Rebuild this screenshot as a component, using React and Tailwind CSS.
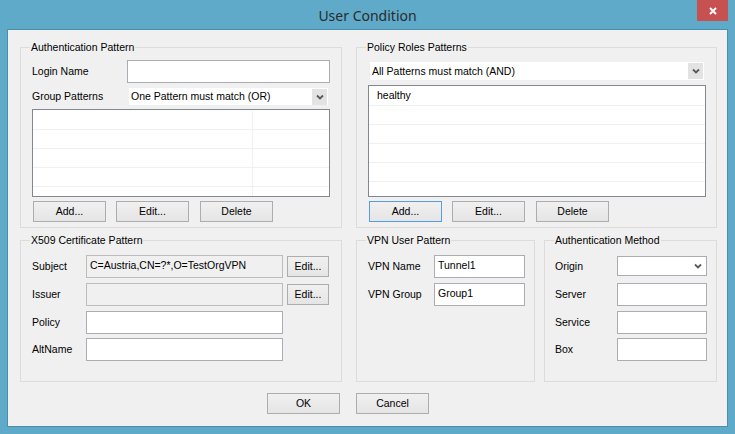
import React from 'react'

function Chevron({ className = '' }) {
  return (
    <svg width="8" height="6" viewBox="0 0 8 6" className={className}>
      <path d="M1 1.5 L4 4.5 L7 1.5" fill="none" stroke="#5a5a5a" strokeWidth="1.8" />
    </svg>
  )
}

function Btn({ w = 'w-[73px]', className = '', focused = false, children }) {
  return (
    <button
      className={`h-[21px] ${w} ${className} border ${
        focused ? 'border-[#569de5]' : 'border-[#adadad]'
      } bg-linear-to-b from-[#f0f0f0] to-[#e5e5e5] flex items-center justify-center leading-none shrink-0`}
    >
      {children}
    </button>
  )
}

function Group({ title, className = '', children }) {
  return (
    <div className={`relative border border-[#dcdcdc] shrink-0 ${className}`}>
      <span className="absolute left-[9px] -top-[7px] bg-[#f0f0f0] px-[1px] leading-[13px] whitespace-nowrap">
        {title}
      </span>
      {children}
    </div>
  )
}

function TextBox({ w, value = '', disabled = false, className = '' }) {
  return (
    <div
      className={`h-[23px] ${w} ${className} border shrink-0 ${
        disabled ? 'border-[#bcbcbc] bg-[#f0f0f0]' : 'border-[#abadb3] bg-white'
      } px-[3px] pt-[3px] leading-[13px] whitespace-nowrap overflow-hidden`}
    >
      {value}
    </div>
  )
}

function FlatSelect({ w, h, value }) {
  return (
    <div className={`${w} ${h} bg-white flex items-center justify-between shrink-0`}>
      <span className="pl-[2px] leading-[13px] whitespace-nowrap">{value}</span>
      <span className="w-[15px] h-[16px] bg-[#e3e3e3] flex items-center justify-center mr-[1px]">
        <Chevron />
      </span>
    </div>
  )
}

function ListBox({ w, h, cols = false, items = [] }) {
  return (
    <div className={`${w} ${h} border border-[#828790] bg-white overflow-hidden pt-[1px]`}>
      {[0, 1, 2, 3, 4, 5].map(i => (
        <div key={i} className="h-[19px] border-b border-[#f0f0f0] flex">
          {cols ? (
            <div className="w-[220px] border-r border-[#f0f0f0]" />
          ) : (
            <div className="pl-[8px] leading-[16px]">{items[i] || ''}</div>
          )}
        </div>
      ))}
    </div>
  )
}

export default function App() {
  return (
    <div className="w-[735px] h-[434px] bg-[#5fa9c9] flex flex-col font-['Liberation_Sans',Arial,sans-serif] text-[10.5px] text-black overflow-hidden">
      {/* title bar */}
      <div className="h-[29px] grid grid-cols-[1fr_auto_1fr] shrink-0">
        <div />
        <div className="font-['Noto_Sans',sans-serif] text-[14px] text-[#2b2b2b] leading-[29px] pt-[1px]">
          User Condition
        </div>
        <div className="flex justify-end pr-[7px]">
          <button className="w-[31px] h-[21px] bg-[#c75050] flex items-center justify-center">
            <svg width="8" height="8" viewBox="0 0 8 8">
              <path d="M1 1 L7 7 M7 1 L1 7" stroke="#fff" strokeWidth="1.9" />
            </svg>
          </button>
        </div>
      </div>

      {/* client area */}
      <div className="mx-[7px] h-[398px] border border-[#4b8fae] bg-[#f0f0f0] pt-[17px] pl-[12px] flex flex-col">
        {/* row 1 */}
        <div className="flex">
          <Group title="Authentication Pattern" className="w-[322px] h-[181px]">
            <div className="mt-[12px] pl-[11px] flex items-center h-[23px]">
              <span className="w-[95px]">Login Name</span>
              <TextBox w="w-[203px]" />
            </div>
            <div className="mt-[5px] pl-[11px] flex items-center h-[17px]">
              <span className="w-[97px]">Group Patterns</span>
              <FlatSelect w="w-[199px]" h="h-[17px]" value="One Pattern must match (OR)" />
            </div>
            <div className="mt-[4px] ml-[11px]">
              <ListBox w="w-[298px]" h="h-[88px]" cols />
            </div>
            <div className="mt-[4px] ml-[12px] flex">
              <Btn>Add...</Btn>
              <Btn className="ml-[10px]">Edit...</Btn>
              <Btn className="ml-[11px]">Delete</Btn>
            </div>
          </Group>

          <Group title="Policy Roles Patterns" className="ml-[14px] w-[361px] h-[181px]">
            <div className="mt-[14px] ml-[13px]">
              <FlatSelect w="w-[334px]" h="h-[18px]" value="All Patterns must match (AND)" />
            </div>
            <div className="mt-[5px] ml-[11px]">
              <ListBox w="w-[338px]" h="h-[112px]" items={['healthy']} />
            </div>
            <div className="mt-[4px] ml-[12px] flex">
              <Btn focused>Add...</Btn>
              <Btn className="ml-[10px]">Edit...</Btn>
              <Btn className="ml-[11px]">Delete</Btn>
            </div>
          </Group>
        </div>

        {/* row 2 */}
        <div className="flex mt-[12px]">
          <Group title="X509 Certificate Pattern" className="w-[322px] h-[142px]">
            <div className="mt-[14px] pl-[11px] flex items-center h-[23px]">
              <span className="w-[54px]">Subject</span>
              <TextBox w="w-[197px]" disabled value="C=Austria,CN=?*,O=TestOrgVPN" />
              <Btn w="w-[42px]" className="ml-[4px]">Edit...</Btn>
            </div>
            <div className="mt-[5px] pl-[11px] flex items-center h-[23px]">
              <span className="w-[54px]">Issuer</span>
              <TextBox w="w-[197px]" disabled />
              <Btn w="w-[42px]" className="ml-[4px]">Edit...</Btn>
            </div>
            <div className="mt-[5px] pl-[11px] flex items-center h-[23px]">
              <span className="w-[54px]">Policy</span>
              <TextBox w="w-[197px]" />
            </div>
            <div className="mt-[4px] pl-[11px] flex items-center h-[23px]">
              <span className="w-[54px]">AltName</span>
              <TextBox w="w-[197px]" />
            </div>
          </Group>

          <Group title="VPN User Pattern" className="ml-[14px] w-[179px] h-[142px]">
            <div className="mt-[14px] pl-[11px] flex items-center h-[23px]">
              <span className="w-[66px]">VPN Name</span>
              <TextBox w="w-[91px]" value="Tunnel1" />
            </div>
            <div className="mt-[5px] pl-[11px] flex items-center h-[23px]">
              <span className="w-[66px]">VPN Group</span>
              <TextBox w="w-[91px]" value="Group1" />
            </div>
          </Group>

          <Group title="Authentication Method" className="ml-[9px] w-[173px] h-[142px]">
            <div className="mt-[14px] pl-[10px] flex items-center h-[23px]">
              <span className="w-[62px]">Origin</span>
              <div className="w-[90px] h-[20px] border border-[#abadb3] bg-white flex items-center justify-end pr-[4px] self-start mt-[1px]">
                <Chevron />
              </div>
            </div>
            <div className="mt-[5px] pl-[10px] flex items-center h-[23px]">
              <span className="w-[62px]">Server</span>
              <TextBox w="w-[90px]" />
            </div>
            <div className="mt-[5px] pl-[10px] flex items-center h-[23px]">
              <span className="w-[62px]">Service</span>
              <TextBox w="w-[90px]" />
            </div>
            <div className="mt-[4px] pl-[10px] flex items-center h-[23px]">
              <span className="w-[62px]">Box</span>
              <TextBox w="w-[90px]" />
            </div>
          </Group>
        </div>

        {/* dialog buttons */}
        <div className="mt-[11px] ml-[247px] flex">
          <Btn>OK</Btn>
          <Btn className="ml-[16px]">Cancel</Btn>
        </div>
      </div>
    </div>
  )
}
